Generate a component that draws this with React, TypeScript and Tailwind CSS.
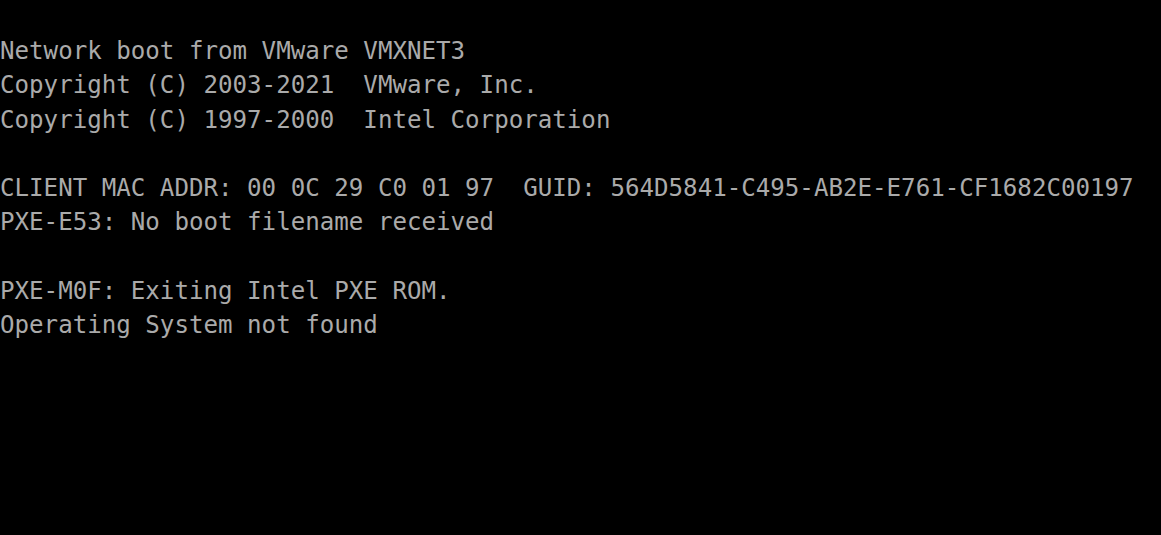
const lines = [
  "Network boot from VMware VMXNET3",
  "Copyright (C) 2003-2021  VMware, Inc.",
  "Copyright (C) 1997-2000  Intel Corporation",
  "",
  "CLIENT MAC ADDR: 00 0C 29 C0 01 97  GUID: 564D5841-C495-AB2E-E761-CF1682C00197",
  "PXE-E53: No boot filename received",
  "",
  "PXE-M0F: Exiting Intel PXE ROM.",
  "Operating System not found",
];

const App = () => {
  return (
    <main className="w-[1161px] h-[535px] bg-black overflow-hidden pt-[34px]">
      <div className="font-['DejaVu_Sans_Mono',monospace] text-[24.15px] leading-[34.3px] text-[#aaaaaa] whitespace-pre">
        {lines.map((line, i) => (
          <div key={i} className="h-[34.3px]">
            {line}
          </div>
        ))}
      </div>
    </main>
  );
};

export default App;
